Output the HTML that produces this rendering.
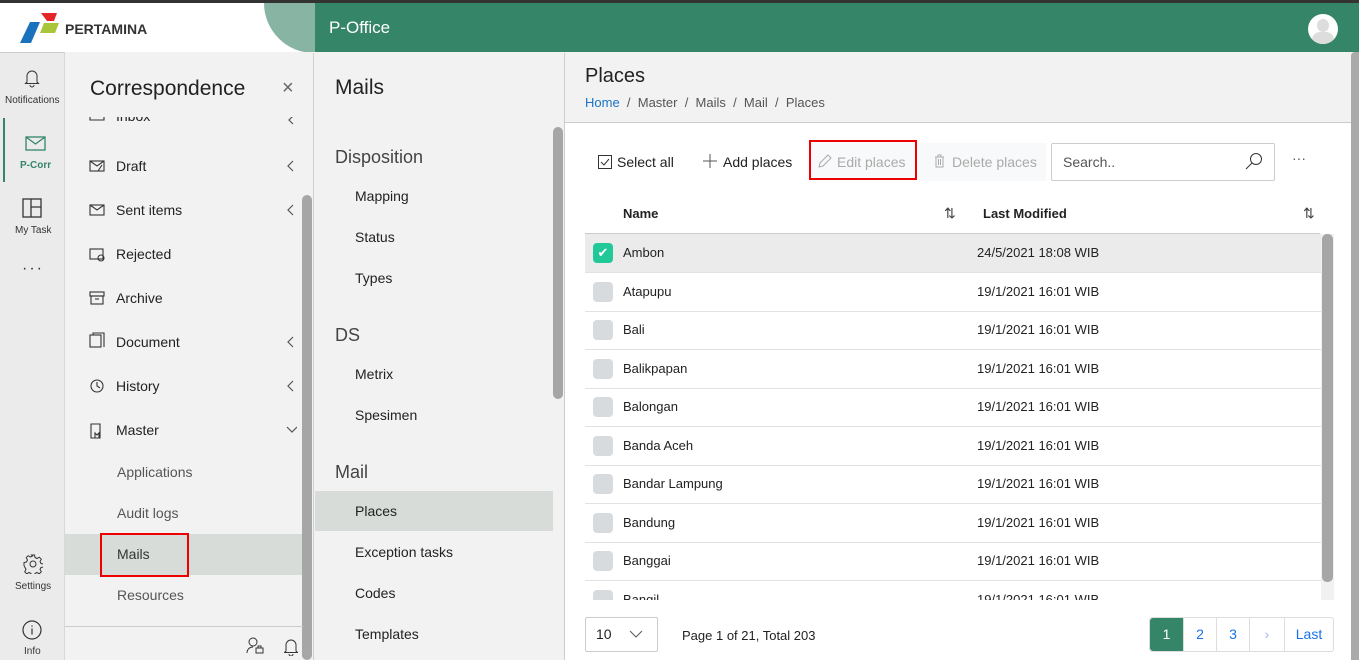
<!DOCTYPE html>
<html><head><meta charset="utf-8"><style>
*{box-sizing:border-box;margin:0;padding:0}
body{width:1359px;height:660px;overflow:hidden;font-family:"Liberation Sans",sans-serif;color:#222;background:#f2f2f2;position:relative;font-size:13px}
.a{position:absolute}
.t{position:absolute;white-space:nowrap}
svg{position:absolute}
</style></head><body>
<div class="a" style="left:0;top:0;width:1359px;height:3px;background:#333"></div>
<div class="a" style="left:0;top:3px;width:1359px;height:49px;background:#358569"></div>
<div class="a" style="left:0;top:3px;width:315px;height:49px;background:#fff;overflow:hidden">
  <div class="a" style="left:264px;top:-50px;width:100px;height:100px;border-radius:50%;background:#88b5a3"></div>
</div>
<svg style="left:18px;top:12px" width="45" height="32" viewBox="0 0 45 32">
<polygon points="23,1 39,1 36,9 29,9" fill="#e42628"/>
<polygon points="26,11 41,11 37,21 22,21" fill="#a9c539"/>
<polygon points="12,10 22,10 13,31 2,31" fill="#1a72bd"/>
</svg>
<div class="t" style="left:65px;top:21px;font-weight:bold;font-size:14px;color:#333">PERTAMINA</div>
<div class="t" style="left:329px;top:18px;color:#fff;font-size:17px">P-Office</div>
<div class="a" style="left:1308px;top:14px;width:30px;height:30px;border-radius:50%;background:#fff;overflow:hidden">
<div class="a" style="left:9px;top:5px;width:12px;height:13px;border-radius:50%;background:#ddd"></div>
<div class="a" style="left:4px;top:18px;width:22px;height:16px;border-radius:8px 8px 0 0;background:#ddd"></div></div>

<!-- rail -->
<div class="a" style="left:0;top:52px;width:65px;height:608px;background:#ebebeb;border-right:1px solid #d8d8d8;border-top:1px solid #ccc"></div>
<svg style="left:24px;top:68px" width="16" height="20" viewBox="0 0 16 20" fill="none" stroke="#333"><path d="M3 14V8a5 5 0 0 1 10 0v6l1.5 1.5h-13z M6 17a2 2 0 0 0 4 0"/></svg>
<div class="t" style="left:5px;top:95px;font-size:10px;color:#333">Notifications</div>
<div class="a" style="left:3px;top:118px;width:2px;height:64px;background:#358569"></div>
<svg style="left:25px;top:136px" width="21" height="15" viewBox="0 0 21 15" fill="none" stroke="#358569" stroke-width="1.3"><rect x="1" y="1" width="19" height="13"/><path d="M1 1l9.5 7L20 1"/></svg>
<div class="t" style="left:20px;top:160px;font-size:10px;color:#358569;font-weight:bold">P-Corr</div>
<svg style="left:22px;top:198px" width="20" height="20" viewBox="0 0 20 20" fill="none" stroke="#333" stroke-width="1.3"><rect x="1" y="1" width="18" height="18"/><path d="M9 1v18M9 9h10"/></svg>
<div class="t" style="left:15px;top:225px;font-size:10px;color:#333">My Task</div>
<div class="t" style="left:22px;top:260px;font-size:16px;color:#333;letter-spacing:2px">···</div>
<svg style="left:23px;top:554px" width="20" height="20" viewBox="0 0 20 20" fill="none" stroke="#333"><circle cx="10" cy="10" r="3"/><path d="M8.5 1h3l.5 2.5 2 1 2.3-1.3 2 2-1.3 2.3 1 2 2.5.5v3l-2.5.5-1 2 1.3 2.3-2 2-2.3-1.3-2 1-.5 2.5h-3l-.5-2.5-2-1-2.3 1.3-2-2 1.3-2.3-1-2L1 11.5v-3l2.5-.5 1-2-1.3-2.3 2-2 2.3 1.3 2-1z"/></svg>
<div class="t" style="left:15px;top:581px;font-size:10px;color:#333">Settings</div>
<svg style="left:22px;top:620px" width="20" height="20" viewBox="0 0 20 20" fill="none" stroke="#333" stroke-width="1.2"><circle cx="10" cy="10" r="9"/><path d="M10 8.5v6M10 5.5v1.2"/></svg>
<div class="t" style="left:24px;top:646px;font-size:10px;color:#333">Info</div>

<!-- correspondence panel -->
<div class="a" style="left:65px;top:53px;width:249px;height:607px;background:#f2f2f2;border-right:1px solid #d0d0d0"></div>
<div class="t" style="left:90px;top:77px;font-size:21px;color:#222">Correspondence</div>
<div class="t" style="left:282px;top:77px;font-size:20px;color:#666">×</div>
<div class="a" style="left:65px;top:117px;width:238px;height:509px;overflow:hidden">
<div class="a" style="left:0;top:417px;width:238px;height:41px;background:#d7dcd9"></div>
<div class="t" style="left:51px;top:-9px;font-size:14px">Inbox</div>
<div class="t" style="left:51px;top:41px;font-size:14px">Draft</div>
<div class="t" style="left:51px;top:85px;font-size:14px">Sent items</div>
<div class="t" style="left:51px;top:129px;font-size:14px">Rejected</div>
<div class="t" style="left:51px;top:173px;font-size:14px">Archive</div>
<div class="t" style="left:51px;top:217px;font-size:14px">Document</div>
<div class="t" style="left:51px;top:261px;font-size:14px">History</div>
<div class="t" style="left:51px;top:305px;font-size:14px">Master</div>
<div class="t" style="left:52px;top:347px;font-size:14px;color:#555">Applications</div>
<div class="t" style="left:52px;top:388px;font-size:14px;color:#555">Audit logs</div>
<div class="t" style="left:52px;top:429px;font-size:14px;color:#333">Mails</div>
<div class="t" style="left:52px;top:470px;font-size:14px;color:#555">Resources</div>
<svg style="left:24px;top:-5px" width="16" height="330" viewBox="0 0 16 330" fill="none" stroke="#333" stroke-width="1.1">
<path d="M1 1v7h14V1"/>
<rect x="1" y="49" width="14" height="10"/><path d="M1 49l7 5 7-5M9 59l4-6"/>
<rect x="1" y="93" width="14" height="10"/><path d="M1 93l7 5 7-5"/>
<rect x="1" y="137" width="13" height="10"/><circle cx="12" cy="146" r="3"/>
<rect x="1" y="180" width="14" height="4"/><rect x="2" y="184" width="12" height="8"/><path d="M6 187h4"/>
<rect x="1" y="223" width="11" height="12"/><path d="M4 223v-2h11v14"/>
<circle cx="8" cy="274" r="6"/><path d="M8 270v4l3 2"/>
<path d="M2 312h9v14H2z M6 326v-5l2 2 2-2v5"/>
</svg>
<svg style="left:220px;top:0px" width="12" height="330" viewBox="0 0 12 330" fill="none" stroke="#555" stroke-width="1.2">
<path d="M8 -1l-4 4 4 4"/>
<path d="M8 44l-5 5 5 5"/>
<path d="M8 88l-5 5 5 5"/>
<path d="M8 220l-5 5 5 5"/>
<path d="M8 264l-5 5 5 5"/>
<path d="M2 310l5 5 5-5"/>
</svg>
</div>
<div class="a" style="left:302px;top:195px;width:10px;height:465px;border-radius:5px;background:#a6a6a6"></div>
<div class="a" style="left:100px;top:533px;width:89px;height:44px;border:2px solid #e00"></div>
<div class="a" style="left:65px;top:626px;width:238px;height:1px;background:#ccc"></div>
<svg style="left:246px;top:637px" width="18" height="18" viewBox="0 0 18 18" fill="none" stroke="#333"><circle cx="7" cy="5" r="4"/><path d="M1 16c0-4 3-6 6-6"/><rect x="10" y="11" width="7" height="5"/><path d="M12 11v-2h3v2"/></svg>
<svg style="left:284px;top:638px" width="14" height="18" viewBox="0 0 14 18" fill="none" stroke="#333"><path d="M2 13V7a5 5 0 0 1 10 0v6l1.5 1.5h-13zM5 16a2 2 0 0 0 4 0"/></svg>

<!-- mails panel -->
<div class="a" style="left:315px;top:53px;width:250px;height:607px;background:#f2f2f2;border-right:1px solid #ccc"></div>
<div class="t" style="left:335px;top:76px;font-size:21px">Mails</div>
<div class="a" style="left:315px;top:491px;width:238px;height:40px;background:#d7dcd9"></div>
<div class="t" style="left:335px;top:147px;font-size:18px;color:#444">Disposition</div>
<div class="t" style="left:355px;top:188px;font-size:14px">Mapping</div>
<div class="t" style="left:355px;top:229px;font-size:14px">Status</div>
<div class="t" style="left:355px;top:270px;font-size:14px">Types</div>
<div class="t" style="left:335px;top:325px;font-size:18px;color:#444">DS</div>
<div class="t" style="left:355px;top:366px;font-size:14px">Metrix</div>
<div class="t" style="left:355px;top:407px;font-size:14px">Spesimen</div>
<div class="t" style="left:335px;top:462px;font-size:18px;color:#444">Mail</div>
<div class="t" style="left:355px;top:503px;font-size:14px">Places</div>
<div class="t" style="left:355px;top:544px;font-size:14px">Exception tasks</div>
<div class="t" style="left:355px;top:585px;font-size:14px">Codes</div>
<div class="t" style="left:355px;top:626px;font-size:14px">Templates</div>
<div class="a" style="left:553px;top:127px;width:10px;height:272px;border-radius:5px;background:#a6a6a6"></div>

<!-- content -->
<div class="t" style="left:585px;top:65px;font-size:20px">Places</div>
<div class="t" style="left:585px;top:95px;font-size:13px;color:#555"><span style="color:#1a73c8">Home</span> &nbsp;/ &nbsp;Master &nbsp;/ &nbsp;Mails &nbsp;/ &nbsp;Mail &nbsp;/ &nbsp;Places</div>
<div class="a" style="left:565px;top:122px;width:794px;height:538px;background:#fff;border-top:1px solid #ccc"></div>
<svg style="left:598px;top:155px" width="14" height="14" viewBox="0 0 14 14" fill="none" stroke="#333"><rect x=".5" y=".5" width="13" height="13"/><path d="M3 7l3 3 5-6"/></svg>
<div class="t" style="left:617px;top:154px;font-size:14px">Select all</div>
<svg style="left:703px;top:154px" width="14" height="14" viewBox="0 0 14 14" stroke="#555"><path d="M7 0v14M0 7h14"/></svg>
<div class="t" style="left:723px;top:154px;font-size:14px">Add places</div>
<div class="a" style="left:809px;top:140px;width:108px;height:40px;border:2px solid #e00;background:#f8f9fa"></div>
<svg style="left:818px;top:154px" width="14" height="14" viewBox="0 0 14 14" fill="none" stroke="#aaa"><path d="M1 13l1-4 8-8 3 3-8 8z"/></svg>
<div class="t" style="left:837px;top:154px;font-size:14px;color:#aaa">Edit places</div>
<div class="a" style="left:919px;top:143px;width:127px;height:38px;background:#f8f9fa"></div>
<svg style="left:934px;top:154px" width="11" height="14" viewBox="0 0 11 14" fill="none" stroke="#aaa"><path d="M1 3h9M4 3V1h3v2M2 3v10h7V3M4.5 5v6M6.5 5v6"/></svg>
<div class="t" style="left:952px;top:154px;font-size:14px;color:#aaa">Delete places</div>
<div class="a" style="left:1051px;top:143px;width:224px;height:38px;border:1px solid #ccc;border-radius:2px"></div>
<div class="t" style="left:1063px;top:154px;font-size:14px;color:#555">Search..</div>
<svg style="left:1245px;top:152px" width="18" height="18" viewBox="0 0 18 18" fill="none" stroke="#333"><circle cx="11" cy="7" r="5.5"/><path d="M7 11l-6 6"/></svg>
<div class="t" style="left:1292px;top:150px;font-size:14px;color:#555">···</div>

<div class="t" style="left:623px;top:206px;font-size:13px;font-weight:bold">Name</div>
<div class="t" style="left:944px;top:205px;font-size:14px;color:#444">⇅</div>
<div class="t" style="left:983px;top:206px;font-size:13px;font-weight:bold">Last Modified</div>
<div class="t" style="left:1303px;top:205px;font-size:14px;color:#444">⇅</div>
<div class="a" style="left:585px;top:233px;width:735px;height:1px;background:#ccc"></div>
<div class="a" style="left:585px;top:234px;width:736px;height:366px;overflow:hidden" id="rows">
<div class="a" style="left:0;top:0;width:737px;height:38px;background:#ebebeb"></div>
</div>
<div class="a" style="left:1321px;top:234px;width:13px;height:366px;background:#f1f1f1"></div>
<div class="a" style="left:1322px;top:234px;width:11px;height:348px;background:#a6a6a6;border-radius:5px"></div>
<div class="a" style="left:1351px;top:52px;width:8px;height:608px;background:#aaa;border-radius:4px 0 0 0"></div>

<div class="a" style="left:585px;top:617px;width:73px;height:35px;border:1px solid #ccc;border-radius:2px"></div>
<div class="t" style="left:596px;top:626px;font-size:14px">10</div>
<svg style="left:629px;top:630px" width="14" height="8" viewBox="0 0 14 8" fill="none" stroke="#555"><path d="M1 1l6 6 6-6"/></svg>
<div class="t" style="left:682px;top:628px;font-size:13px">Page 1 of 21, Total 203</div>
<div class="a" style="left:1149px;top:617px;width:185px;height:35px;border:1px solid #ddd;border-radius:3px;display:flex;font-size:14px;color:#1a73e8;line-height:33px;text-align:center">
<div style="width:33px;background:#358569;color:#fff;border-radius:3px 0 0 3px">1</div>
<div style="width:33px;border-left:1px solid #ddd">2</div>
<div style="width:33px;border-left:1px solid #ddd">3</div>
<div style="width:35px;border-left:1px solid #ddd;color:#9bbcf0">›</div>
<div style="flex:1;border-left:1px solid #ddd">Last</div>
</div>
<script>
var n=["Ambon","Atapupu","Bali","Balikpapan","Balongan","Banda Aceh","Bandar Lampung","Bandung","Banggai","Bangil"];
var r=document.getElementById("rows"),h="";
for(var i=0;i<n.length;i++){var y=i*38.5;
h+='<div class="a" style="left:0;top:'+(y+38)+'px;width:737px;height:1px;background:#e2e2e2"></div>';
h+='<div class="a" style="left:8px;top:'+(y+9)+'px;width:20px;height:20px;border-radius:4px;background:'+(i==0?'#20c997':'#d8dbdd')+';color:#fff;font-size:13px;text-align:center;line-height:20px">'+(i==0?'✔':'')+'</div>';
h+='<div class="t" style="left:38px;top:'+(y+11)+'px;font-size:13px">'+n[i]+'</div>';
h+='<div class="t" style="left:392px;top:'+(y+11)+'px;font-size:13px">'+(i==0?'24/5/2021 18:08 WIB':'19/1/2021 16:01 WIB')+'</div>';}
r.innerHTML+=h;
</script>
</body></html>
